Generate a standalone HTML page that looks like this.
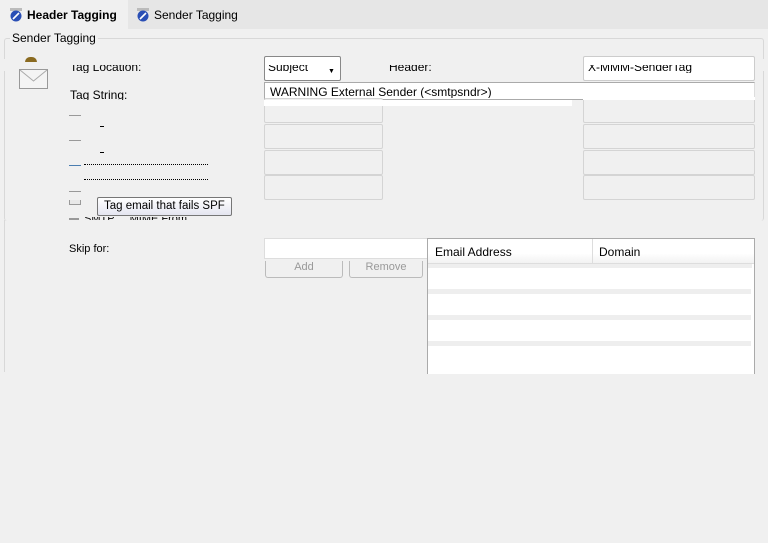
<!DOCTYPE html>
<html><head><style>
body{margin:0;width:768px;height:543px;background:#f0f0f0;font-family:"Liberation Sans",sans-serif;font-size:12px;color:#000;position:relative;overflow:hidden}
.a{position:absolute;white-space:nowrap}
.box{position:absolute;border:1px solid #d4d4d4;border-radius:2px;background:#f0f0f0;box-sizing:border-box}
.wh{position:absolute;background:#fff;box-sizing:border-box}
.cb{position:absolute;width:12px;height:1px;background:#999}
</style></head><body>
<div class="a" style="left:0;top:0;width:768px;height:29px;background:#e6e6e6"></div>
<div class="a" style="left:0;top:0;width:128px;height:29px;background:#f0f0f0"></div>
<svg class="a" style="top:8px;left:9px" width="14" height="14"><rect x="1" y="0" width="12" height="3" fill="#bbb"/><circle cx="7" cy="8" r="5.5" fill="#2a4fb5"/><path d="M4 11L10 5" stroke="#fff" stroke-width="1.6"/></svg>
<div class="a" style="left:27px;top:8px;font-weight:bold">Header Tagging</div>
<svg class="a" style="top:8px;left:136px" width="14" height="14"><rect x="1" y="0" width="12" height="3" fill="#bbb"/><circle cx="7" cy="8" r="5.5" fill="#2a4fb5"/><path d="M4 11L10 5" stroke="#fff" stroke-width="1.6"/></svg>
<div class="a" style="left:154px;top:8px">Sender Tagging</div>
<div class="a" style="left:4px;top:38px;width:758px;height:182px;border:1px solid #d8d8d8;border-bottom:none;border-radius:3px"></div>
<div class="a" style="left:4px;top:220px;width:1px;height:152px;background:#d8d8d8"></div>
<div class="a" style="left:10px;top:31px;background:#f0f0f0;padding:0 2px">Sender Tagging</div>
<div class="a" style="left:0;top:59px;width:768px;height:12px;background:#f0f0f0"></div>
<div class="a" style="left:25px;top:57px;width:12px;height:5px;background:#8a6a20;border-radius:6px 6px 0 0"></div>
<svg class="a" style="left:19px;top:69px" width="29" height="20"><rect x="0.5" y="0.5" width="28" height="19" fill="#f4f4f4" stroke="#999"/><path d="M1 1L14.5 12L28 1" fill="none" stroke="#aaa"/></svg>
<div class="a" style="left:70px;top:65px;height:8px;overflow:hidden;line-height:4px">Tag Location:</div>
<div class="wh" style="left:264px;top:56px;width:77px;height:25px;border:1px solid #888;border-radius:2px"></div>
<div class="a" style="left:268px;top:65px;height:8px;overflow:hidden;line-height:4px">Subject</div>
<div class="a" style="left:328px;top:68px;font-size:7px">▼</div>
<div class="a" style="left:389px;top:65px;height:8px;overflow:hidden;line-height:4px">Header:</div>
<div class="wh" style="left:583px;top:56px;width:172px;height:25px;border:1px solid #ccc;border-radius:2px"></div>
<div class="a" style="left:588px;top:65px;height:8px;overflow:hidden;line-height:4px">X-MMM-SenderTag</div>
<div class="a" style="left:70px;top:88px;height:12px;overflow:hidden">Tag String:</div>
<div class="wh" style="left:264px;top:82px;width:491px;height:18px;border:1px solid #aaa;border-right-color:#ddd"></div>
<div class="a" style="left:270px;top:85px;height:13px;overflow:hidden">WARNING External Sender (&lt;smtpsndr&gt;)</div>
<div class="box" style="left:264px;top:98px;width:119px;height:25px"></div>
<div class="box" style="left:264px;top:124px;width:119px;height:25px"></div>
<div class="box" style="left:264px;top:150px;width:119px;height:25px"></div>
<div class="box" style="left:264px;top:175px;width:119px;height:25px"></div>
<div class="box" style="left:583px;top:98px;width:172px;height:25px"></div>
<div class="box" style="left:583px;top:124px;width:172px;height:25px"></div>
<div class="box" style="left:583px;top:150px;width:172px;height:25px"></div>
<div class="box" style="left:583px;top:175px;width:172px;height:25px"></div>
<div class="wh" style="left:264px;top:100px;width:308px;height:6px"></div>
<div class="wh" style="left:583px;top:97px;width:172px;height:3px"></div>
<div class="cb" style="left:69px;top:115px"></div>
<div class="a" style="left:100px;top:126px;width:4px;height:1px;background:#000"></div>
<div class="cb" style="left:69px;top:140px"></div>
<div class="a" style="left:100px;top:152px;width:4px;height:1px;background:#000"></div>
<div class="cb" style="left:69px;top:165px;background:#4a7db0"></div>
<div class="a" style="left:84px;top:164px;width:124px;height:1px;border-top:1px dotted #000"></div>
<div class="a" style="left:84px;top:179px;width:124px;height:1px;border-top:1px dotted #000"></div>
<div class="cb" style="left:69px;top:191px"></div>
<div class="a" style="left:69px;top:200px;width:10px;height:4px;border:1px solid #999;border-top:none;background:#e8e8e8"></div>
<div class="a" style="left:69px;top:218px;width:10px;height:2px;background:#999"></div>
<div class="a" style="left:84px;top:217px;width:160px;height:3px;overflow:hidden;font-size:11px;line-height:4px">SMTP ... MIME From .....</div>
<div class="a" style="left:97px;top:197px;width:135px;height:19px;border:1px solid #767676;border-radius:2px;background:linear-gradient(#fff,#e4e5f0);box-sizing:border-box;padding:2px 0 0 6px;font-size:11.5px;overflow:hidden">Tag email that fails SPF</div>
<div class="a" style="left:69px;top:243px;font-size:11px">Skip for:</div>
<div class="wh" style="left:264px;top:238px;width:163px;height:21px;border:1px solid #ddd;border-right:none"></div>
<div class="a" style="left:265px;top:261px;width:78px;height:17px;border:1px solid #bbb;border-top:none;border-radius:0 0 3px 3px;box-sizing:border-box;text-align:center;color:#999;font-size:11px;line-height:12px;overflow:hidden">Add</div>
<div class="a" style="left:349px;top:261px;width:74px;height:17px;border:1px solid #bbb;border-top:none;border-radius:0 0 3px 3px;box-sizing:border-box;text-align:center;color:#999;font-size:11px;line-height:12px;overflow:hidden">Remove</div>
<div class="wh" style="left:427px;top:238px;width:328px;height:136px;border:1px solid #aaa;border-bottom:none"></div>
<div class="a" style="left:428px;top:239px;width:326px;height:24px;background:linear-gradient(#fff 60%,#f2f2f2);border-bottom:1px solid #ddd"></div>
<div class="a" style="left:592px;top:239px;width:1px;height:24px;background:#ddd"></div>
<div class="a" style="left:435px;top:245px">Email Address</div>
<div class="a" style="left:599px;top:245px">Domain</div>
<div class="a" style="left:428px;top:264px;width:324px;height:4px;background:#eee"></div>
<div class="a" style="left:428px;top:289px;width:323px;height:5px;background:#eee"></div>
<div class="a" style="left:428px;top:315px;width:323px;height:5px;background:#eee"></div>
<div class="a" style="left:428px;top:341px;width:323px;height:5px;background:#eee"></div>
</body></html>
